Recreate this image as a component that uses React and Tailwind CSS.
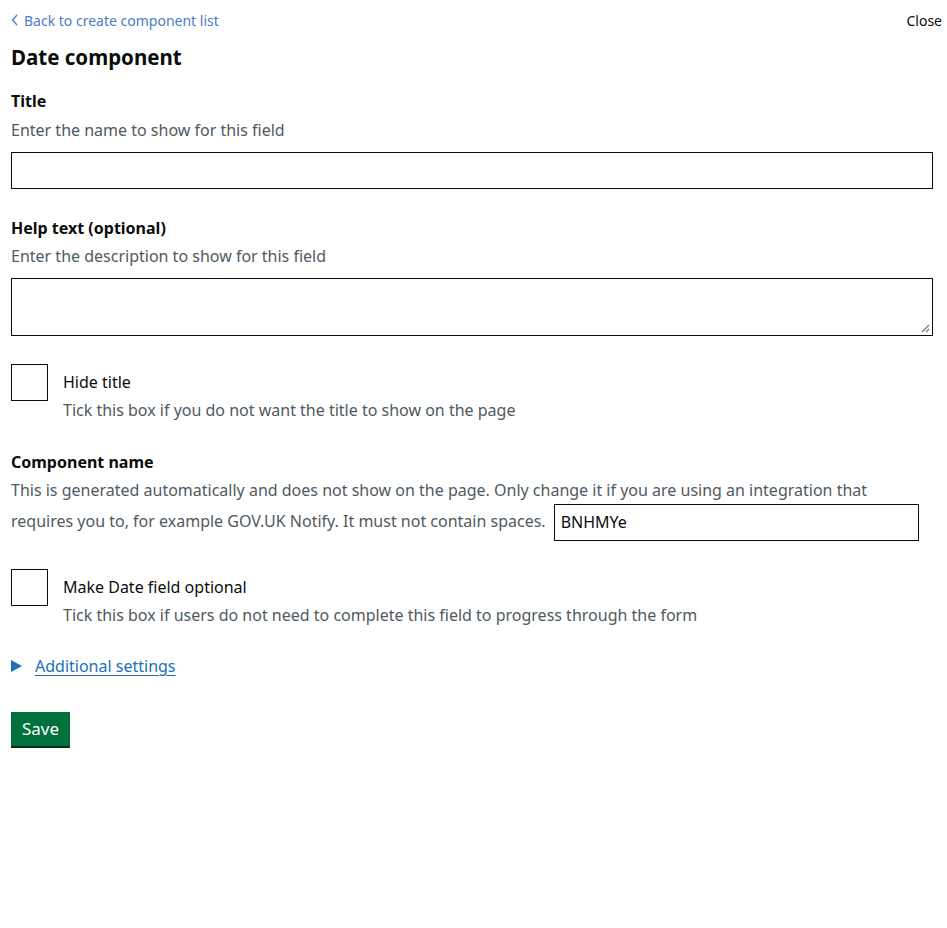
import React from 'react';

const Hint = ({ children, className = '' }) => (
  <p className={`text-[16px] leading-[20px] text-[#505a5f] ${className}`}>{children}</p>
);

const Checkbox = ({ label, hint }) => (
  <div className="flex items-start">
    <div className="w-[37px] h-[37px] border-[1.5px] border-[#0b0c0c] shrink-0 bg-white" />
    <div className="ml-[15px] pt-[8px]">
      <p className="text-[16px] leading-[20px] text-[#0b0c0c]">{label}</p>
      <Hint className="mt-[8px]">{hint}</Hint>
    </div>
  </div>
);

export default function App() {
  return (
    <div className="min-h-[928px] bg-white px-[11px] text-[#0b0c0c]" style={{ fontFamily: '"Noto Sans", Arial, sans-serif' }}>
      <div className="flex items-center justify-between pt-[10px] h-[30px]">
        <a className="flex items-center gap-[5px] text-[14px] text-[#4c7cc4]">
          <svg width="8" height="12" viewBox="0 0 8 12" fill="none" stroke="#4c7cc4" strokeWidth="1.3">
            <path d="M6 1 L1.5 6 L6 11" />
          </svg>
          Back to create component list
        </a>
        <span className="text-[14px] text-[#0b0c0c] -mr-[6px]">Close</span>
      </div>

      <h1 className="mt-[12px] text-[20.5px] leading-[30px] font-bold">Date component</h1>

      <div className="mt-[19px]">
        <label className="block text-[16px] leading-[20px] font-bold">Title</label>
        <Hint className="mt-[9px]">Enter the name to show for this field</Hint>
        <div className="mt-[12px] h-[37px] w-[922px] border-[1.5px] border-[#0b0c0c]" />
      </div>

      <div className="mt-[29px]">
        <label className="block text-[16px] leading-[20px] font-bold">Help text (optional)</label>
        <Hint className="mt-[8px]">Enter the description to show for this field</Hint>
        <div className="relative mt-[12px] h-[58px] w-[922px] border-[1.5px] border-[#0b0c0c]">
          <svg className="absolute right-[2px] bottom-[2px]" width="10" height="10" viewBox="0 0 10 10" stroke="#767676" strokeWidth="1.2">
            <path d="M9 2 L2 9 M9 6 L6 9" />
          </svg>
        </div>
      </div>

      <div className="mt-[28px]">
        <Checkbox label="Hide title" hint="Tick this box if you do not want the title to show on the page" />
      </div>

      <div className="mt-[32px]">
        <label className="block text-[16px] leading-[20px] font-bold">Component name</label>
        <p className="mt-[3px] text-[16px] leading-[31px] text-[#505a5f] max-w-[922px]">
          This is generated automatically and does not show on the page. Only change it if you are using an integration that requires you to, for example GOV.UK Notify. It must not contain spaces.
          <span className="ml-[8px] -my-[3px] inline-flex items-center align-middle h-[37px] w-[365px] border-[1.5px] border-[#0b0c0c] px-[6px] text-[#0b0c0c]">BNHMYe</span>
        </p>
      </div>

      <div className="mt-[31px]">
        <Checkbox label="Make Date field optional" hint="Tick this box if users do not need to complete this field to progress through the form" />
      </div>

      <div className="mt-[31px] flex items-center">
        <svg width="11" height="12" viewBox="0 0 11 12">
          <path d="M0 0 L11 6 L0 12 Z" fill="#1d70b8" />
        </svg>
        <a className="ml-[13px] text-[16px] leading-[20px] text-[#1d70b8] underline underline-offset-[3px]">Additional settings</a>
      </div>

      <button className="mt-[36px] h-[34px] px-[11px] bg-[#00703c] text-white text-[17px] shadow-[0_2px_0_#002d18]">Save</button>
    </div>
  );
}
